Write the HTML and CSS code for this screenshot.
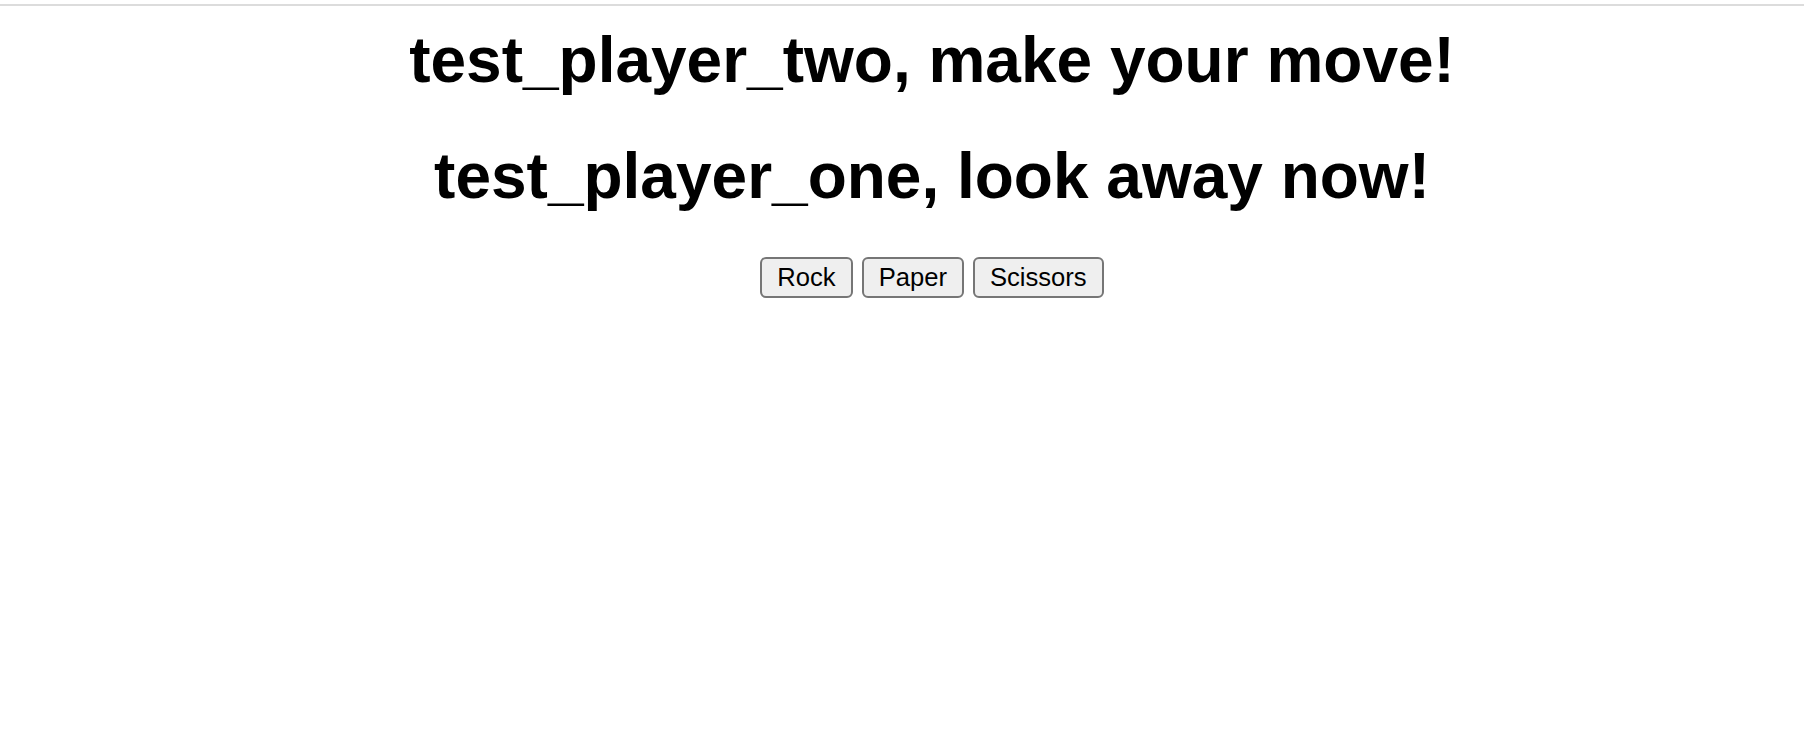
FILE: index.html
```html
<!DOCTYPE html>
<html>
<head>
<meta charset="utf-8">
<title>Rock Paper Scissors</title>
<link rel="stylesheet" href="styles.css">
</head>
<body>
<div class="topbar"></div>
<main class="game">
  <h1 class="title">test_player_two, make your move!</h1>
  <h1 class="title">test_player_one, look away now!</h1>
  <div class="moves">
    <button class="move">Rock</button>
    <button class="move">Paper</button>
    <button class="move">Scissors</button>
  </div>
</main>
</body>
</html>
```

FILE: styles.css
```css
html, body {
  margin: 0;
  padding: 0;
  background: #ffffff;
}

body {
  font-family: "Liberation Sans", Arial, Helvetica, sans-serif;
  color: #000000;
}

.topbar {
  margin-top: 4px;
  height: 2px;
  background: #dcdcdc;
}

.game {
  display: flex;
  flex-direction: column;
  align-items: center;
  padding: 16.5px 0 0 60px;
  gap: 42px;
}

.title {
  margin: 0;
  font-size: 64px;
  line-height: 74px;
  font-weight: bold;
  text-align: center;
}

.moves {
  display: flex;
  gap: 9px;
  margin-top: 2px;
}

.move {
  font-family: "Liberation Sans", Arial, Helvetica, sans-serif;
  font-size: 25.6px;
  line-height: 29px;
  padding: 4px 15px;
  border: 2px solid #767676;
  border-radius: 6px;
  background: #efefef;
  color: #000000;
}
```
